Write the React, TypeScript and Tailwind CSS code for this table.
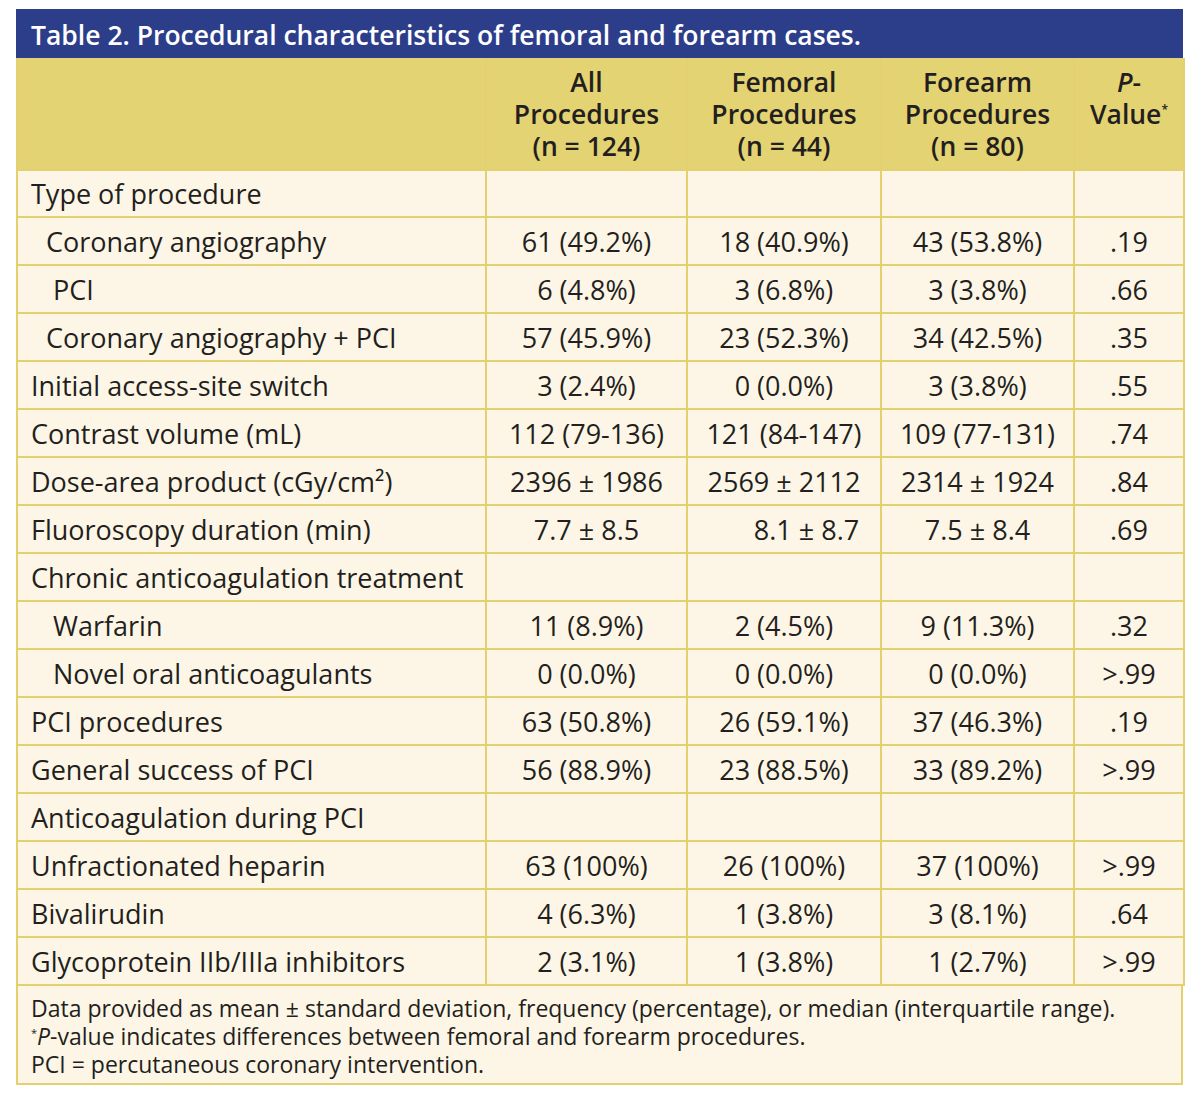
import React from 'react'

type Row = {
  label: string
  indent?: 0 | 1 | 2
  all?: string
  femoral?: string
  forearm?: string
  p?: string
  femoralShift?: boolean
}

const rows: Row[] = [
  { label: 'Type of procedure' },
  { label: 'Coronary angiography', indent: 1, all: '61 (49.2%)', femoral: '18 (40.9%)', forearm: '43 (53.8%)', p: '.19' },
  { label: 'PCI', indent: 2, all: '6 (4.8%)', femoral: '3 (6.8%)', forearm: '3 (3.8%)', p: '.66' },
  { label: 'Coronary angiography + PCI', indent: 1, all: '57 (45.9%)', femoral: '23 (52.3%)', forearm: '34 (42.5%)', p: '.35' },
  { label: 'Initial access-site switch', all: '3 (2.4%)', femoral: '0 (0.0%)', forearm: '3 (3.8%)', p: '.55' },
  { label: 'Contrast volume (mL)', all: '112 (79-136)', femoral: '121 (84-147)', forearm: '109 (77-131)', p: '.74' },
  { label: 'Dose-area product (cGy/cm²)', all: '2396 ± 1986', femoral: '2569 ± 2112', forearm: '2314 ± 1924', p: '.84' },
  { label: 'Fluoroscopy duration (min)', all: '7.7 ± 8.5', femoral: '8.1 ± 8.7', forearm: '7.5 ± 8.4', p: '.69', femoralShift: true },
  { label: 'Chronic anticoagulation treatment' },
  { label: 'Warfarin', indent: 2, all: '11 (8.9%)', femoral: '2 (4.5%)', forearm: '9 (11.3%)', p: '.32' },
  { label: 'Novel oral anticoagulants', indent: 2, all: '0 (0.0%)', femoral: '0 (0.0%)', forearm: '0 (0.0%)', p: '>.99' },
  { label: 'PCI procedures', all: '63 (50.8%)', femoral: '26 (59.1%)', forearm: '37 (46.3%)', p: '.19' },
  { label: 'General success of PCI', all: '56 (88.9%)', femoral: '23 (88.5%)', forearm: '33 (89.2%)', p: '>.99' },
  { label: 'Anticoagulation during PCI' },
  { label: 'Unfractionated heparin', all: '63 (100%)', femoral: '26 (100%)', forearm: '37 (100%)', p: '>.99' },
  { label: 'Bivalirudin', all: '4 (6.3%)', femoral: '1 (3.8%)', forearm: '3 (8.1%)', p: '.64' },
  { label: 'Glycoprotein IIb/IIIa inhibitors', all: '2 (3.1%)', femoral: '1 (3.8%)', forearm: '1 (2.7%)', p: '>.99' },
]

const indentClass = ['pl-[13px]', 'pl-[28px]', 'pl-[35px]']

export default function App() {
  return (
    <div className="min-h-screen bg-white pt-[9px] pl-[16px] font-['Open_Sans',sans-serif] text-[#231f20]">
      <div className="w-[1167px]">
        {/* Title bar */}
        <div className="h-[49px] bg-[#2c3e8a] pl-[15px] pt-[3px] flex items-center text-[26.5px] leading-[36px] font-semibold text-white">
          Table 2. Procedural characteristics of femoral and forearm cases.
        </div>

        <table className="w-full table-fixed border-collapse bg-[#fdf6e6]">
          <colgroup>
            <col className="w-[469px]" />
            <col className="w-[201px]" />
            <col className="w-[194px]" />
            <col className="w-[193px]" />
            <col className="w-[110px]" />
          </colgroup>
          <thead>
            <tr className="h-[112px] bg-[#e4d373] text-[26.5px] leading-[32px] font-semibold">
              <th className="border-2 border-t-0 border-[#e4d06f]" />
              <th className="border-2 border-t-0 border-[#e4d06f] align-top pt-[8px] font-semibold">
                All
                <br />
                Procedures
                <br />
                (n = 124)
              </th>
              <th className="border-2 border-t-0 border-[#e4d06f] align-top pt-[8px] font-semibold">
                Femoral
                <br />
                Procedures
                <br />
                (n = 44)
              </th>
              <th className="border-2 border-t-0 border-[#e4d06f] align-top pt-[8px] font-semibold">
                Forearm
                <br />
                Procedures
                <br />
                (n = 80)
              </th>
              <th className="border-2 border-t-0 border-[#e4d06f] align-top pt-[8px] font-semibold">
                <i>P</i>-
                <br />
                Value<span className="relative top-[-10px] text-[12px] leading-none">*</span>
              </th>
            </tr>
          </thead>
          <tbody className="text-[27px] leading-[37px]">
            {rows.map((r, i) => (
              <tr key={r.label} className={i === 0 ? 'h-[47px]' : 'h-[48px]'}>
                <td className={`border-2 border-[#e4d06f] whitespace-nowrap ${indentClass[r.indent ?? 0]}`}>
                  {r.label}
                </td>
                <td className="border-2 border-[#e4d06f] text-center whitespace-nowrap">{r.all}</td>
                <td
                  className={`border-2 border-[#e4d06f] text-center whitespace-nowrap ${
                    r.femoralShift ? 'pl-[45px]' : ''
                  }`}
                >
                  {r.femoral}
                </td>
                <td className="border-2 border-[#e4d06f] text-center whitespace-nowrap">{r.forearm}</td>
                <td className="border-2 border-[#e4d06f] text-center whitespace-nowrap">{r.p}</td>
              </tr>
            ))}
          </tbody>
        </table>

        {/* Footnote */}
        <div className="border-2 border-t-0 border-[#e4d06f] bg-[#fdf6e6] pl-[13px] pt-[8px] pb-[5px] text-[23px] leading-[28px]">
          <p>Data provided as mean ± standard deviation, frequency (percentage), or median (interquartile range).</p>
          <p>
            <span className="relative top-[-8px] text-[11px] leading-none">*</span>
            <i>P</i>-value indicates differences between femoral and forearm procedures.
          </p>
          <p>PCI = percutaneous coronary intervention.</p>
        </div>
      </div>
    </div>
  )
}
